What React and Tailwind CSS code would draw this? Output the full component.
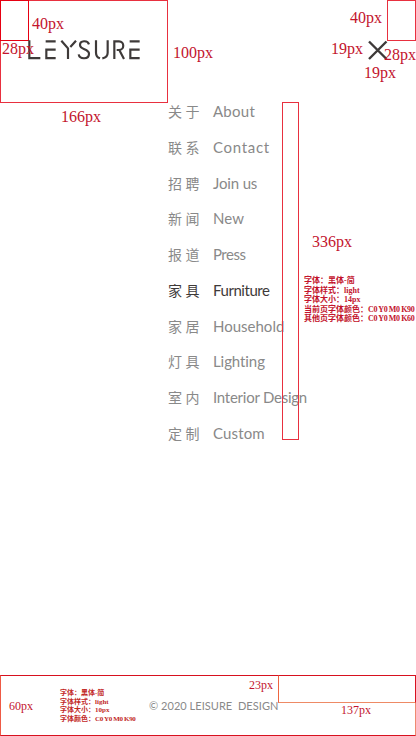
const items = [
  ['关于', 'About', 'tracking-[0.250px]'],
  ['联系', 'Contact', 'tracking-[0.700px]'],
  ['招聘', 'Join us', 'tracking-[-0.150px]'],
  ['新闻', 'New', 'tracking-[0.100px]'],
  ['报道', 'Press', 'tracking-[-0.500px]'],
  ['家具', 'Furniture', 'tracking-[-0.450px]'],
  ['家居', 'Household', 'tracking-[0px]'],
  ['灯具', 'Lighting', 'tracking-[-0.080px]'],
  ['室内', 'Interior Design', 'tracking-[-0.250px]'],
  ['定制', 'Custom', 'tracking-[0.150px]'],
];

function Logo() {
  return (
    <svg className="ml-[27px] -mt-px h-[20px] w-[114px]" viewBox="84 120 342 60" fill="none" stroke="#3e3a39" strokeWidth="6.500">
      <path d="M88 121V174.500H121" />
      <path d="M137 124H167M167 149H139V174.500H167" />
      <path d="M184 122L204 145V177M228 122L211 141" />
      <path d="M267 133C263 120 240 121 240 135C240 150 267 145 267 161C267 179 239 179 236 163" />
      <path d="M288 121V158Q288 171 300 175M323 121V158Q323 172 307 175" />
      <path d="M343 177V124H357C374 124 374 150 357 150H350M359 152L372 177" />
      <path d="M389 124H419M419 149H391V174.500H419" />
    </svg>
  );
}

function Mark({ className = '', size = 'text-[16px]', children }) {
  return (
    <span className={`shrink-0 whitespace-nowrap font-['Liberation_Serif',serif] leading-4 text-[#c3142d] ${size} ${className}`}>
      {children}
    </span>
  );
}

export default function App() {
  return (
    <div className="flex h-[736px] w-[416px] flex-col overflow-hidden bg-white font-['Lato','Noto_Sans_CJK_SC',sans-serif] [font-variant-ligatures:none]">
      <header className="flex h-[102px] shrink-0 items-start">
        <div className="relative h-[103px] w-[168px] shrink-0 border border-[#e8303f]">
          <div className="-ml-px -mt-px flex gap-[3px]">
            <div className="h-[41px] w-[29px] border border-[#e60012]" />
            <Mark className="mt-4">40px</Mark>
          </div>
          <Logo />
          <Mark className="absolute left-px top-10">28px</Mark>
        </div>
        <Mark className="ml-[5px] mt-[45px]">100px</Mark>
        <div className="ml-auto flex w-[85px] flex-col">
          <div className="flex h-[41px] justify-end gap-[5px]">
            <Mark className="mt-2.5">40px</Mark>
            <div className="w-[29px] border border-[#e8303f]" />
          </div>
          <div className="relative -mt-px flex h-[25px] items-start">
            <Mark className="mt-px">19px</Mark>
            <svg className="ml-[5px] h-5 w-5" viewBox="0 0 20 20" stroke="#3e3a39" strokeWidth="2.400">
              <path d="M1 1.500L18.500 19M18.500 1.500L1 19" />
            </svg>
            <Mark className="absolute right-0 top-[7px]">28px</Mark>
          </div>
          <Mark className="pl-[33px]">19px</Mark>
        </div>
      </header>

      <main className="flex items-start">
        <aside className="flex w-[168px] shrink-0 pl-[61px] pt-[7px]">
          <Mark>166px</Mark>
        </aside>

        <nav className="-mt-px flex w-[114px] shrink-0 flex-col gap-[15.750px]">
          {items.map(([zh, en, tracking]) => (
            <a
              key={en}
              className={`flex h-5 items-center whitespace-nowrap ${en === 'Furniture' ? 'text-[#3e3a39]' : 'text-[#898989]'}`}
            >
              <span className="w-[45px] shrink-0 font-['Noto_Sans_CJK_SC',sans-serif] text-[14px] leading-5 tracking-[3.500px]">{zh}</span>
              <span className={`text-[15px] leading-5 ${tracking}`}>{en}</span>
            </a>
          ))}
        </nav>

        <div className="h-[338px] w-[17px] shrink-0 border border-[#e8303f]" />

        <section className="flex flex-col pl-[5px] pt-[132px]">
          <Mark className="ml-[8px]">336px</Mark>
          <div className="mt-[26px] whitespace-nowrap font-['Liberation_Serif','Noto_Sans_CJK_SC',serif] text-[8px] font-bold leading-[9.600px] text-[#c3142d]">
            <p>字体：黑体-简</p>
            <p>字体样式：light</p>
            <p>字体大小：14px</p>
            <p>当前页字体颜色：<span className="tracking-[-0.400px]">C0 Y0 M0 K90</span></p>
            <p>其他页字体颜色：<span className="tracking-[-0.400px]">C0 Y0 M0 K60</span></p>
          </div>
        </section>
      </main>

      <footer className="mt-auto flex h-[61px] shrink-0 items-start border border-[#d7111f] border-l-[#ee5a45] border-r-[#ee8a70]">
        <Mark size="text-[12px]" className="w-[51px] pl-2 mt-[22px]">60px</Mark>
        <div className="ml-[8px] mt-[13px] w-[76px] shrink-0 whitespace-nowrap font-['Liberation_Serif','Noto_Sans_CJK_SC',serif] text-[7px] font-bold leading-[8.500px] text-[#c2281f]">
          <p>字体：黑体-简</p>
          <p>字体样式：light</p>
          <p>字体大小：10px</p>
          <p>字体颜色：<span className="tracking-[-0.350px]">C0 Y0 M0 K90</span></p>
        </div>
        <div className="ml-[13px] flex w-[129px] shrink-0 flex-col">
          <Mark size="text-[12px]" className="self-end pr-[5px] mt-px">23px</Mark>
          <span className="mt-[5px] whitespace-pre text-[11px] leading-4 tracking-[0.040px] text-[#898989]">© 2020 LEISURE  DESIGN</span>
        </div>
        <div className="-mr-px -mt-px flex flex-1 flex-col">
          <div className="h-[28px] border border-[#ee6540] border-b-[#ee8a65] border-r-[#d7111f] border-t-[#d7111f]" />
          <Mark size="text-[12px]" className="-mt-px pl-[63px]">137px</Mark>
        </div>
      </footer>
    </div>
  );
}
